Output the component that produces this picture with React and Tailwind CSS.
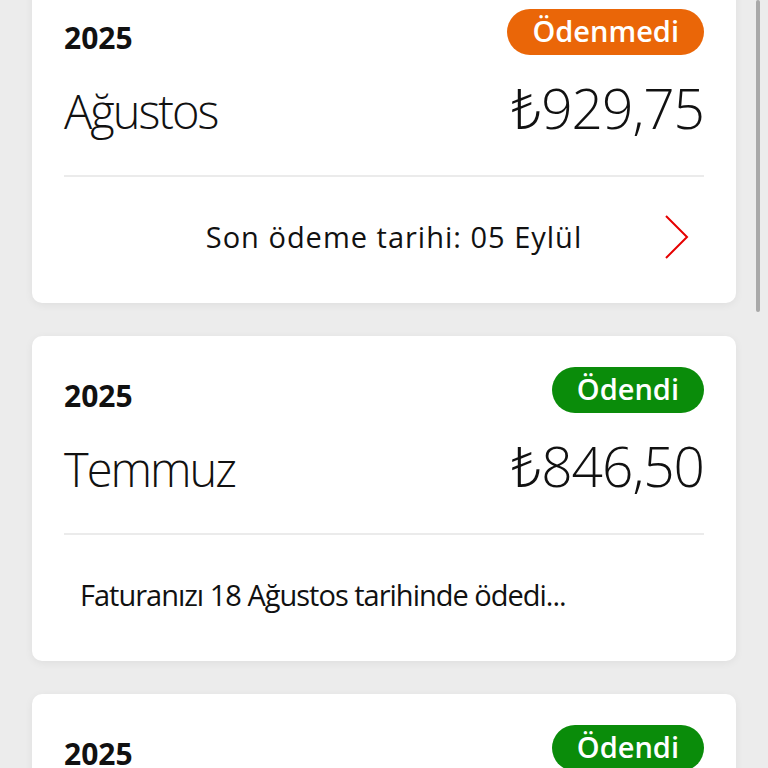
import React from 'react';

const bills = [
  { year: '2025', month: 'Ağustos', amount: '₺929,75', paid: false, note: 'Son ödeme tarihi: 05 Eylül' },
  { year: '2025', month: 'Temmuz', amount: '₺846,50', paid: true, note: 'Faturanızı 18 Ağustos tarihinde ödedi...' },
  { year: '2025', month: 'Haziran', amount: '₺812,40', paid: true, note: 'Faturanızı 17 Temmuz tarihinde ödedi...' },
];

const Chevron = () => (
  <svg width="28" height="46" viewBox="0 0 28 46" fill="none">
    <path d="M3 2 L24 23 L3 44" stroke="#e60000" strokeWidth="2" strokeLinejoin="miter" />
  </svg>
);

const BillCard = ({ bill }) => (
  <div className="bg-white rounded-[10px] shadow-[0_2px_8px_rgba(0,0,0,0.06)] px-8 pt-[31px] h-[325px] flex flex-col">
    <div className="flex items-end justify-between h-[46px]">
      <span className="text-[30px] font-bold text-[#111] leading-none pb-[2px]">{bill.year}</span>
      <span
        className={
          bill.paid
            ? 'h-[46px] px-[25px] rounded-full bg-[#0a8c0a] text-white text-[29px] font-semibold leading-none flex items-center pb-[3px]'
            : 'h-[46px] px-[25px] rounded-full bg-[#ea6608] text-white text-[29px] font-semibold leading-none flex items-center pb-[3px]'
        }
      >
        {bill.paid ? 'Ödendi' : 'Ödenmedi'}
      </span>
    </div>
    <div className="flex items-baseline justify-between h-[86px] pt-[25px] text-[#111]">
      <span className="text-[47px] font-light leading-none tracking-[-2px]">{bill.month}</span>
      <span className="text-[55px] font-light leading-none tracking-[-1px]">{bill.amount}</span>
    </div>
    <div className="mt-[34px] h-[2px] bg-[#ebebeb]" />
    <div className="flex-1 flex items-center pb-[6px]">
      {bill.paid ? (
        <span className="pl-4 text-[29px] text-[#111] tracking-[-1px]">{bill.note}</span>
      ) : (
        <>
          <div className="w-[76px]" />
          <span className="flex-1 text-center text-[29px] text-[#111] tracking-[1px]">{bill.note}</span>
          <div className="w-[56px] flex justify-end pr-[13px]">
            <Chevron />
          </div>
        </>
      )}
    </div>
  </div>
);

export default function App() {
  return (
    <div
      className="relative h-[768px] w-[768px] overflow-hidden bg-[#ececec]"
      style={{ fontFamily: '"Open Sans", "Noto Sans", sans-serif' }}
    >
      <div className="flex flex-col gap-[33px] px-8 -mt-[22px]">
        {bills.map((b, i) => (
          <BillCard key={i} bill={b} />
        ))}
      </div>
      <div className="absolute right-[8px] top-0 w-[4px] h-[312px] rounded-full bg-[#a9a9a9]" />
    </div>
  );
}
